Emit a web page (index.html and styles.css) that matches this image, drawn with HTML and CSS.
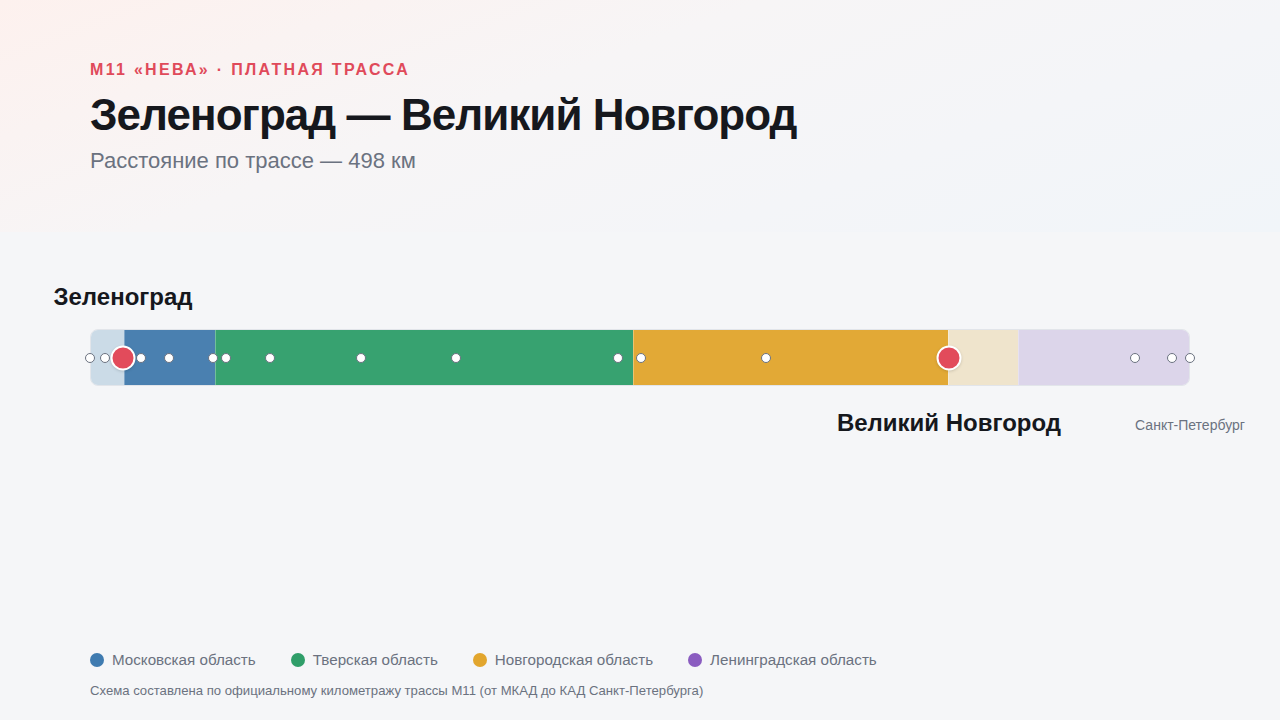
FILE: index.html
```html
<!DOCTYPE html>
<html lang="ru">
<head>
<meta charset="utf-8">
<title>Зеленоград — Великий Новгород</title>
<link rel="stylesheet" href="styles.css">
</head>
<body>
<div class="page">
  <header class="hero">
    <p class="eyebrow">М11 «НЕВА» · ПЛАТНАЯ ТРАССА</p>
    <h1 class="title">Зеленоград — Великий Новгород</h1>
    <p class="subtitle">Расстояние по трассе — 498 км</p>
  </header>

  <section class="route">
    <div class="labels labels-top">
      <span class="label label-main" style="left: 3%">Зеленоград</span>
    </div>
    <div class="track">
      <div class="bar">
        <div class="seg seg-moscow-faded" style="width: 3%"></div>
        <div class="seg seg-moscow" style="width: 8.27%"></div>
        <div class="seg seg-tver" style="width: 38.09%"></div>
        <div class="seg seg-novgorod" style="width: 28.73%"></div>
        <div class="seg seg-novgorod-faded" style="width: 6.36%"></div>
        <div class="seg seg-len-faded" style="width: 15.55%"></div>
      </div>
      <span class="dot" style="left: 0%"></span>
      <span class="dot" style="left: 1.364%"></span>
      <span class="dot" style="left: 4.636%"></span>
      <span class="dot" style="left: 7.182%"></span>
      <span class="dot" style="left: 11.182%"></span>
      <span class="dot" style="left: 12.364%"></span>
      <span class="dot" style="left: 16.364%"></span>
      <span class="dot" style="left: 24.636%"></span>
      <span class="dot" style="left: 33.273%"></span>
      <span class="dot" style="left: 48%"></span>
      <span class="dot" style="left: 50.091%"></span>
      <span class="dot" style="left: 61.455%"></span>
      <span class="dot" style="left: 95%"></span>
      <span class="dot" style="left: 98.364%"></span>
      <span class="dot" style="left: 100%"></span>
      <span class="stop" style="left: 3%"></span>
      <span class="stop" style="left: 78.09%"></span>
    </div>
    <div class="labels labels-bottom">
      <span class="label label-main" style="left: 78.09%">Великий Новгород</span>
      <span class="label label-minor" style="left: 100%">Санкт-Петербург</span>
    </div>
  </section>

  <footer class="footer">
    <ul class="legend">
      <li class="legend-item"><span class="swatch swatch-moscow"></span>Московская область</li>
      <li class="legend-item"><span class="swatch swatch-tver"></span>Тверская область</li>
      <li class="legend-item"><span class="swatch swatch-novgorod"></span>Новгородская область</li>
      <li class="legend-item"><span class="swatch swatch-len"></span>Ленинградская область</li>
    </ul>
    <p class="note">Схема составлена по официальному километражу трассы М11 (от МКАД до КАД Санкт-Петербурга)</p>
  </footer>
</div>
</body>
</html>
```

FILE: styles.css
```css
* { box-sizing: border-box; }

html, body {
  margin: 0;
  padding: 0;
}

body {
  background: #f5f6f8;
  font-family: "Liberation Sans", Arial, sans-serif;
  color: #16181d;
}

.page {
  width: 1280px;
  height: 720px;
  display: flex;
  flex-direction: column;
  overflow: hidden;
}

.hero {
  height: 232px;
  padding: 60px 90px 0;
  background: linear-gradient(160deg, #fdf1ee 0%, #f7f5f6 40%, #f4f5f8 70%, #f1f5f9 100%);
}

.eyebrow {
  margin: 0;
  font-size: 16px;
  line-height: 20px;
  font-weight: 700;
  letter-spacing: 2.3px;
  color: #e04a5a;
}

.title {
  margin: 9px 0 0;
  font-size: 44px;
  line-height: 52px;
  font-weight: 700;
  letter-spacing: -0.96px;
  color: #16181d;
}

.subtitle {
  margin: 6px 0 0;
  font-size: 22px;
  line-height: 28px;
  color: #6b7280;
}

.route {
  margin: 51px 90px 0;
}

.labels {
  position: relative;
  height: 28px;
}

.labels-bottom {
  margin-top: 23px;
}

.label {
  position: absolute;
  top: 0;
  transform: translateX(-50%);
  white-space: nowrap;
}

.label-main {
  font-size: 24px;
  line-height: 28px;
  font-weight: 700;
  color: #16181d;
}

.label-minor {
  padding-top: 2px;
  font-size: 14px;
  line-height: 28px;
  color: #6b7280;
}

.track {
  position: relative;
  height: 57px;
  margin-top: 18px;
}

.bar {
  display: flex;
  height: 100%;
  border: 1px solid #e2e5ea;
  border-radius: 8px;
  overflow: hidden;
}

.seg {
  height: 100%;
}

.seg + .seg {
  box-shadow: inset 1px 0 0 rgba(255, 255, 255, 0.3);
}

.seg-moscow-faded { background: #cbdbe7; }
.seg-moscow { background: #4a80b0; }
.seg-tver { background: #37a270; }
.seg-novgorod { background: #e2a936; }
.seg-novgorod-faded { background: #efe4cc; }
.seg-len-faded { background: #dcd5ea; }

.dot {
  position: absolute;
  top: 50%;
  width: 10px;
  height: 10px;
  border-radius: 50%;
  background: #ffffff;
  border: 1.6px solid #6b7280;
  transform: translate(-50%, -50%);
}

.stop {
  position: absolute;
  top: 50%;
  width: 25px;
  height: 25px;
  border-radius: 50%;
  background: #e24b5b;
  border: 2.5px solid #ffffff;
  box-shadow: 0 1px 3px rgba(0, 0, 0, 0.15);
  transform: translate(-50%, -50%);
}

.footer {
  margin-top: auto;
  padding: 0 90px 20px;
}

.legend {
  display: flex;
  column-gap: 35px;
  margin: 0;
  padding: 0;
  list-style: none;
}

.legend-item {
  display: flex;
  align-items: center;
  gap: 8px;
  font-size: 15.2px;
  line-height: 20px;
  color: #6b7280;
}

.swatch {
  width: 14px;
  height: 14px;
  border-radius: 50%;
  flex: none;
}

.swatch-moscow { background: #3f7bb0; }
.swatch-tver { background: #2f9e69; }
.swatch-novgorod { background: #e2a62e; }
.swatch-len { background: #8a5cc0; }

.note {
  margin: 12px 0 0;
  font-size: 13.13px;
  line-height: 18px;
  color: #6b7280;
}
```
